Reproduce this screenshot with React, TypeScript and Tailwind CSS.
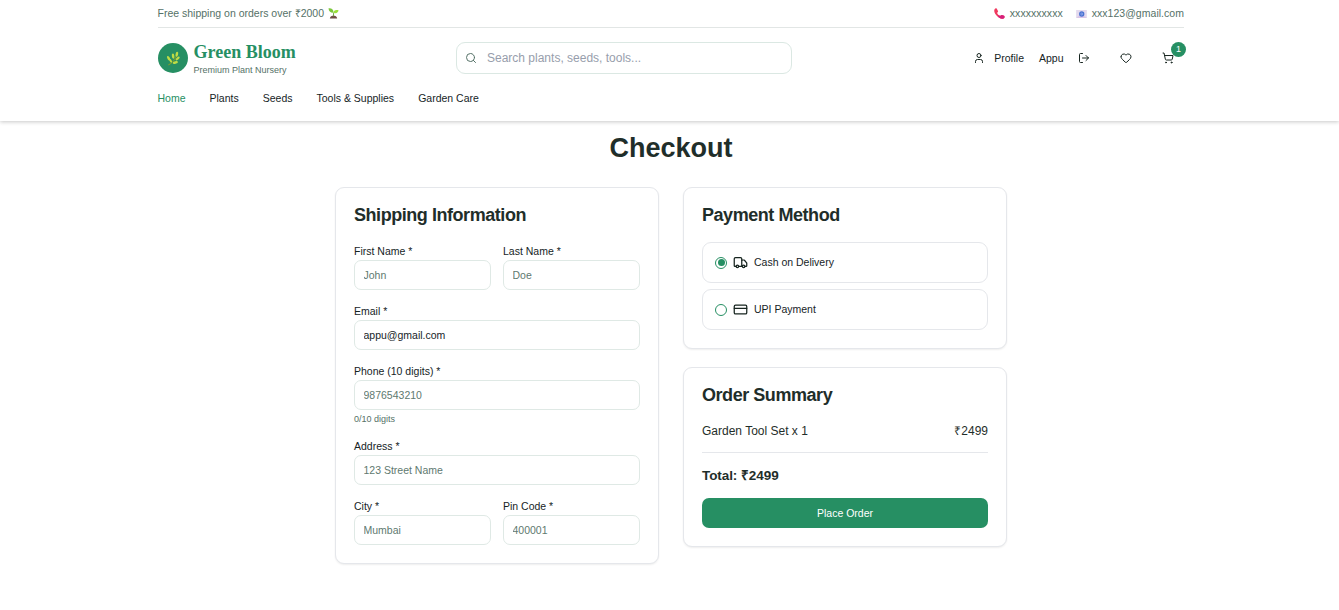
import React from "react";
import { CreditCard, Heart, LogOut, Search, ShoppingCart, Truck, User } from "lucide-react";

const Seedling = () => (
  <svg viewBox="0 0 24 24" className="h-[11px] w-[11px]">
    <path d="M4 23c1-5 4-6 8-6s7 1 8 6z" fill="#704d46" />
    <path d="M11 18c0-4 0-6 1-9h2c-1 3-1 5-1 9z" fill="#689f38" />
    <path d="M12 10C8 11 2 9 1 1c6-1 11 2 11 9z" fill="#7cc83c" />
    <path d="M12 10c0-5 5-7 11-5-1 5-5 8-11 5z" fill="#9be03a" />
  </svg>
);

const PhoneReceiver = () => (
  <svg viewBox="0 0 24 24" className="h-[11px] w-[11px]">
    <path
      d="M1 3c2-3 5-3 6 0l2 4c0 2-2 2-2 4 1 3 3 5 6 6 2 0 2-2 4-2l5 2c2 2 1 5-1 6-4 2-10-1-14-5S-1 8 1 3z"
      fill="#f03a5f"
    />
    <path d="M10 15c1 1 2 2 3 2 2 0 2-2 4-2l5 2c2 2 1 5-1 6-4 1-9-1-12-4z" fill="#d61f7c" />
  </svg>
);

const EmailBadge = () => (
  <svg viewBox="0 0 24 18" className="h-[8px] w-[11px]">
    <rect width="24" height="18" fill="#e3d9ee" />
    <path d="M0 18l12-9 12 9" fill="#d9c6e8" />
    <circle cx="12.5" cy="9" r="6" fill="#4a72d2" />
    <circle cx="12.5" cy="9" r="2.2" fill="none" stroke="#a9bdf2" strokeWidth="1.4" />
  </svg>
);

const Herb = () => (
  <svg viewBox="0 0 24 24" className="h-[15px] w-[14px]">
    <path d="M4 23C10 20 15 15 18 7" fill="none" stroke="#7d9b2d" strokeWidth="1.8" />
    <g fill="#bfdc45">
      <ellipse cx="18.6" cy="4.6" rx="2.2" ry="4.4" transform="rotate(12 18.6 4.6)" />
      <ellipse cx="12.2" cy="8" rx="2.2" ry="4.4" transform="rotate(-8 12.2 8)" />
      <ellipse cx="20" cy="12" rx="2.1" ry="4.2" transform="rotate(45 20 12)" />
      <ellipse cx="4.6" cy="11.6" rx="2.2" ry="4.3" transform="rotate(-30 4.6 11.6)" />
      <ellipse cx="8" cy="16" rx="1.8" ry="3.4" transform="rotate(-30 8 16)" />
      <ellipse cx="16" cy="19" rx="2.2" ry="4.6" transform="rotate(76 16 19)" />
    </g>
  </svg>
);

const NAV = ["Home", "Plants", "Seeds", "Tools & Supplies", "Garden Care"];

function Header() {
  return (
    <header className="h-[121px] bg-white pl-[157.5px] pr-[155px] shadow-[0_1px_4px_rgba(0,0,0,0.22)]">
      <div className="flex h-[28px] items-center justify-between border-b border-[#e2e6e5] text-[10.5px] text-[#557167]">
        <div className="flex items-center gap-[4px]">
          <span>Free shipping on orders over ₹2000</span>
          <Seedling />
        </div>
        <div className="flex items-center gap-[13px]">
          <span className="flex items-center gap-[4.5px]">
            <PhoneReceiver />
            <span className="tracking-[0.04px]">xxxxxxxxxx</span>
          </span>
          <span className="flex items-center gap-[5px]">
            <EmailBadge />
            <span className="tracking-[0.03px]">xxx123@gmail.com</span>
          </span>
        </div>
      </div>

      <div className="flex h-[60px] items-center text-[#16241f]">
        <div className="flex w-[298.5px] items-center gap-[6px]">
          <div className="flex h-[30px] w-[30px] items-center justify-center rounded-full bg-[#268f63]">
            <Herb />
          </div>
          <div className="flex flex-col">
            <span className="font-['Liberation_Serif',serif] text-[18px] leading-[24px] font-bold text-[#268f63]">
              Green Bloom
            </span>
            <span className="text-[9px] leading-[12px] text-[#557167]">Premium Plant Nursery</span>
          </div>
        </div>
        <div className="flex h-[32px] w-[336px] items-center gap-[10px] rounded-[9px] border border-[#dbe8e3] pl-[8px]">
          <Search className="h-[12px] w-[12px] text-[#557167]" />
          <input
            className="w-[260px] bg-transparent text-[12px] outline-none placeholder:text-[#979eac]"
            placeholder="Search plants, seeds, tools..."
          />
        </div>
        <div className="ml-auto flex items-center pr-[10px] text-[10.5px] font-medium">
          <User className="mr-[9px] h-[12px] w-[12px]" />
          <span className="pt-[2px]">Profile</span>
          <span className="ml-[15px] pt-[2px]">Appu</span>
          <LogOut className="ml-[14.5px] h-[12px] w-[12px]" />
          <Heart className="ml-[30px] h-[12px] w-[12px]" />
          <div className="relative ml-[30px]">
            <ShoppingCart className="h-[12px] w-[12px]" />
            <span className="absolute -top-[10px] left-[9px] flex h-[15px] w-[15px] items-center justify-center rounded-full bg-[#268f63] text-[9px] text-white">
              1
            </span>
          </div>
        </div>
      </div>

      <nav className="flex h-[21px] items-center gap-[24px] text-[10.5px] text-[#16241f]">
        {NAV.map((item, i) => (
          <a key={item} className={i === 0 ? "text-[#268f63]" : ""}>
            {item}
          </a>
        ))}
      </nav>
    </header>
  );
}

function Card({ title, children }: { title: string; children: React.ReactNode }) {
  return (
    <section className="rounded-[9px] border border-[#e5e7eb] bg-white p-[18px] shadow-[0_1px_2px_rgba(0,0,0,0.07)]">
      <h2 className="mb-[18px] text-[18px] leading-[18px] font-bold tracking-[-0.025em]">{title}</h2>
      {children}
    </section>
  );
}

function Field({
  label,
  placeholder,
  value,
  hint,
}: {
  label: string;
  placeholder?: string;
  value?: string;
  hint?: string;
}) {
  return (
    <div className="flex min-w-0 flex-1 flex-col">
      <label className="text-[10.5px] leading-[18px] text-[#16241f]">{label}</label>
      <input
        className="h-[30px] w-full rounded-[7px] border border-[#dfe9e5] bg-white px-[8.5px] text-[10.5px] text-[#16241f] outline-none placeholder:text-[#60796f]"
        placeholder={placeholder}
        defaultValue={value}
      />
      {hint && <p className="mt-[3px] text-[9px] leading-[12px] text-[#557167]">{hint}</p>}
    </div>
  );
}

function Option({ label, icon, checked }: { label: string; icon: React.ReactNode; checked?: boolean }) {
  return (
    <label className="flex h-[41px] items-center gap-[6px] rounded-[9px] border border-[#e5e7eb] px-[12px] text-[10.5px] text-[#16241f]">
      <span className="flex h-[12px] w-[12px] items-center justify-center rounded-full border border-[#268f63]">
        {checked && <span className="h-[7px] w-[7px] rounded-full bg-[#268f63]" />}
      </span>
      {icon}
      <span>{label}</span>
    </label>
  );
}

export default function App() {
  return (
    <div className="min-h-[610px] bg-white font-['Liberation_Sans',Arial,sans-serif] text-[#1f2e2a]">
      <Header />
      <main className="ml-[335px] w-[672px] pt-[10px]">
        <h1 className="text-center text-[27px] leading-[34px] font-bold">Checkout</h1>
        <div className="mt-[22px] grid grid-cols-2 items-start gap-[24px]">
          <Card title="Shipping Information">
            <div className="flex flex-col gap-[12px]">
              <div className="flex gap-[12px]">
                <Field label="First Name *" placeholder="John" />
                <Field label="Last Name *" placeholder="Doe" />
              </div>
              <Field label="Email *" value="appu@gmail.com" />
              <Field label="Phone (10 digits) *" placeholder="9876543210" hint="0/10 digits" />
              <Field label="Address *" placeholder="123 Street Name" />
              <div className="flex gap-[12px]">
                <Field label="City *" placeholder="Mumbai" />
                <Field label="Pin Code *" placeholder="400001" />
              </div>
            </div>
          </Card>
          <div className="flex flex-col gap-[18px]">
            <Card title="Payment Method">
              <div className="flex flex-col gap-[6px]">
                <Option label="Cash on Delivery" icon={<Truck className="h-[15px] w-[15px]" />} checked />
                <Option label="UPI Payment" icon={<CreditCard className="h-[15px] w-[15px]" />} />
              </div>
            </Card>
            <Card title="Order Summary">
              <div className="flex justify-between text-[12px] leading-[18px]">
                <span>Garden Tool Set x 1</span>
                <span>₹2499</span>
              </div>
              <div className="mt-[12px] border-t border-[#e5e7eb] pt-[12px] text-[13.5px] leading-[21px] font-bold">
                <span className="tracking-[-0.08px]">Total: ₹2499</span>
              </div>
              <button className="mt-[12px] h-[30px] w-full rounded-[7px] bg-[#268f63] pt-[2px] text-[10.5px] font-medium text-white">
                Place Order
              </button>
            </Card>
          </div>
        </div>
      </main>
    </div>
  );
}
